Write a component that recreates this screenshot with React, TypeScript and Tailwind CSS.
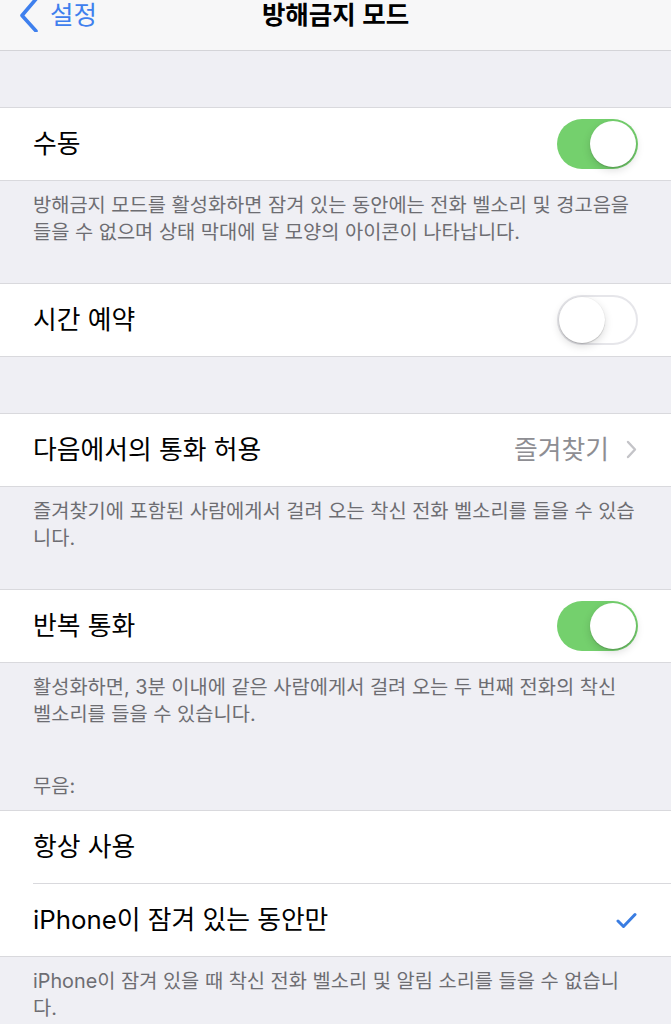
import React from "react";

const FONT = { fontFamily: '"Inter", "Noto Sans CJK KR", sans-serif' };

function Toggle({ on }: { on: boolean }) {
  return on ? (
    <div className="relative w-[81px] h-[50px] rounded-full bg-[#74d06d] shrink-0">
      <div className="absolute right-[2px] top-[2px] w-[46px] h-[46px] rounded-full bg-white shadow-[0_3px_8px_rgba(0,0,0,0.15),0_1px_1px_rgba(0,0,0,0.16)]" />
    </div>
  ) : (
    <div className="relative w-[81px] h-[50px] rounded-full bg-white border-2 border-[#e6e6ea] shrink-0">
      <div className="absolute left-0 top-0 w-[46px] h-[46px] rounded-full bg-white shadow-[0_3px_8px_rgba(0,0,0,0.15),0_1px_1px_rgba(0,0,0,0.16),0_0_0_0.5px_rgba(0,0,0,0.04)]" />
    </div>
  );
}

function Row({ label, right }: { label: string; right?: React.ReactNode }) {
  return (
    <div className="h-[72px] flex items-center justify-between pl-[33px] pr-[33px] bg-white">
      <span className="text-[25.8px] text-black leading-none">{label}</span>
      {right}
    </div>
  );
}

function Footer({ lines }: { lines: string[] }) {
  return (
    <div className="pl-[33px] pr-[10px] pt-[11px] pb-[37px] text-[19.8px] leading-[27px] text-[#6d6d72]">
      {lines.map((l, i) => (
        <div key={i} className="whitespace-nowrap">
          {l}
        </div>
      ))}
    </div>
  );
}

export default function App() {
  return (
    <div className="w-[671px] h-[1024px] overflow-hidden bg-[#efeff4]" style={FONT}>
      {/* Nav bar */}
      <div className="relative h-[51px] bg-[#f7f7f8] border-b border-[#d4d4d8] flex items-start">
        <div className="flex items-start pl-[19px]">
          <svg width="20" height="34" viewBox="0 0 20 34" className="mt-[-2px]">
            <path d="M17 1 L3 17.5 L17 33" fill="none" stroke="#3f80ee" strokeWidth="3.6" strokeLinecap="round" strokeLinejoin="round" />
          </svg>
          <span className="ml-[11px] text-[25.5px] leading-[30px] text-[#3f80ee]">설정</span>
        </div>
        <div className="absolute left-0 right-0 top-0 flex justify-center">
          <span className="text-[25.5px] leading-[30px] font-semibold text-black">방해금지 모드</span>
        </div>
      </div>

      <div className="h-[56px]" />

      <div className="border-y border-[#d9d9dd]">
        <Row label="수동" right={<Toggle on />} />
      </div>
      <Footer
        lines={[
          "방해금지 모드를 활성화하면 잠겨 있는 동안에는 전화 벨소리 및 경고음을",
          "들을 수 없으며 상태 막대에 달 모양의 아이콘이 나타납니다.",
        ]}
      />

      <div className="border-y border-[#d9d9dd]">
        <Row label="시간 예약" right={<Toggle on={false} />} />
      </div>

      <div className="h-[56px]" />

      <div className="border-y border-[#d9d9dd]">
        <Row
          label="다음에서의 통화 허용"
          right={
            <div className="flex items-center">
              <span className="text-[25.8px] leading-none text-[#8e8e93]">즐겨찾기</span>
              <svg width="11" height="19" viewBox="0 0 11 19" className="ml-[17px] mr-[1px]">
                <path d="M2 2 L9 9.5 L2 17" fill="none" stroke="#c4c4c8" strokeWidth="2.4" strokeLinecap="round" strokeLinejoin="round" />
              </svg>
            </div>
          }
        />
      </div>
      <Footer
        lines={[
          "즐겨찾기에 포함된 사람에게서 걸려 오는 착신 전화 벨소리를 들을 수 있습",
          "니다.",
        ]}
      />

      <div className="border-y border-[#d9d9dd]">
        <Row label="반복 통화" right={<Toggle on />} />
      </div>
      <div className="pl-[33px] pr-[10px] pt-[11px] pb-[10px] text-[19.8px] leading-[27px] text-[#6d6d72]">
        <div className="whitespace-nowrap">활성화하면, 3분 이내에 같은 사람에게서 걸려 오는 두 번째 전화의 착신</div>
        <div className="whitespace-nowrap">벨소리를 들을 수 있습니다.</div>
        <div className="mt-[45px] whitespace-nowrap">무음:</div>
      </div>

      <div className="border-y border-[#d9d9dd] bg-white">
        <Row label="항상 사용" />
        <div className="ml-[33px] h-px bg-[#d9d9dd]" />
        <Row
          label="iPhone이 잠겨 있는 동안만"
          right={
            <svg width="21" height="17" viewBox="0 0 21 17" className="mr-[1px]">
              <path d="M2 9 L7.5 14.5 L19 2.5" fill="none" stroke="#3a7de2" strokeWidth="3" strokeLinecap="round" strokeLinejoin="round" />
            </svg>
          }
        />
      </div>
      <Footer
        lines={[
          "iPhone이 잠겨 있을 때 착신 전화 벨소리 및 알림 소리를 들을 수 없습니",
          "다.",
        ]}
      />
    </div>
  );
}
